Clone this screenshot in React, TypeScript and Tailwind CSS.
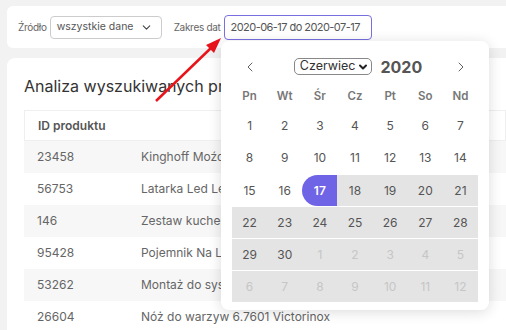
import { ChevronDown, ChevronLeft, ChevronRight } from 'lucide-react';

const rows = [
  { id: '23458', name: 'Kinghoff Moździerz' },
  { id: '56753', name: 'Latarka Led Lenser' },
  { id: '146', name: 'Zestaw kuchenny' },
  { id: '95428', name: 'Pojemnik Na Lunch' },
  { id: '53262', name: 'Montaż do systemu' },
  { id: '26604', name: 'Nóż do warzyw 6.7601 Victorinox' },
];

const weekdays = ['Pn', 'Wt', 'Śr', 'Cz', 'Pt', 'So', 'Nd'];

// six weeks shown, June 2020 starts on Monday
const weeks: { day: number; muted: boolean }[][] = [];
for (let w = 0; w < 6; w++) {
  const week = [];
  for (let d = 0; d < 7; d++) {
    const n = w * 7 + d + 1;
    week.push(n <= 30 ? { day: n, muted: false } : { day: n - 30, muted: true });
  }
  weeks.push(week);
}

function Calendar() {
  return (
    <div className="absolute left-[221px] top-[41px] w-[268px] h-[269px] bg-white rounded-lg shadow-[0_2px_14px_rgba(0,0,0,0.14)] px-[11px]">
      <div className="flex items-center h-[47px] pt-[4px] w-[246px]">
        <div className="w-[35px] flex justify-center text-[#555]">
          <ChevronLeft className="w-4 h-4" strokeWidth={1.4} />
        </div>
        <div className="flex-1 flex items-center justify-center gap-[8px] pl-[6px]">
          <div className="h-[17px] flex items-center gap-[2px] border border-[#888] rounded-[5px] pl-[5px] pr-[2px] text-[12.5px] text-[#333] leading-none">
            Czerwiec
            <ChevronDown className="w-[12px] h-[12px] text-[#222]" strokeWidth={4} />
          </div>
          <span className="text-[16px] font-bold text-[#555]">2020</span>
        </div>
        <div className="w-[35px] flex justify-center text-[#555]">
          <ChevronRight className="w-4 h-4" strokeWidth={1.4} />
        </div>
      </div>
      <div className="grid grid-cols-7 w-[246px] h-[18px] text-[11.5px] font-semibold text-[#777]">
        {weekdays.map((w) => (
          <div key={w} className="flex items-center justify-center">{w}</div>
        ))}
      </div>
      <div className="w-[246px] mt-[4px]">
        {weeks.map((week, wi) => (
          <div key={wi} className={`grid grid-cols-7 h-[32px] ${wi > 1 ? 'border-t border-white' : ''}`}>
            {week.map((c, ci) => {
              const inRange = wi > 2 || (wi === 2 && ci >= 2);
              const start = wi === 2 && ci === 2;
              return (
                <div
                  key={ci}
                  className={`flex items-center justify-center text-[12px] ${
                    start
                      ? 'bg-[#7064e6] text-white font-semibold rounded-l-full'
                      : inRange
                        ? 'bg-[#e4e4e4]'
                        : ''
                  } ${start ? '' : c.muted ? 'text-[#c6c6c6]' : 'text-[#555]'}`}
                >
                  {c.day}
                </div>
              );
            })}
          </div>
        ))}
      </div>
    </div>
  );
}

export default function App() {
  return (
    <div className="relative w-[506px] h-[330px] overflow-hidden bg-[#f2f2f2] font-['Inter',sans-serif]">
      {/* filters */}
      <div className="ml-[7px] mt-[6px] h-[42px] bg-white rounded-l-md flex items-center pl-[11px] text-[10px] tracking-[-0.3px] text-[#666] whitespace-nowrap">
        <span>Źródło</span>
        <div className="ml-[3px] w-[112px] h-[23px] border border-[#ccc] rounded-[4px] flex items-center justify-between pl-[6px] pr-[8px] text-[10.5px] tracking-normal text-[#555]">
          wszystkie dane
          <ChevronDown className="w-[13px] h-[13px] text-[#444]" strokeWidth={2} />
        </div>
        <span className="ml-[12px]">Zakres dat</span>
        <div className="ml-[3px] w-[148px] h-[25px] border border-[#7a6fe0] rounded-[4px] flex items-center pl-[6px] text-[11px] tracking-[-0.55px] text-[#555]">
          2020-06-17 do 2020-07-17
        </div>
      </div>

      {/* report card */}
      <div className="ml-[7px] mt-[10px] h-[280px] bg-white rounded-tl-lg pl-[17px] pt-[14px]">
        <h2 className="text-[16px] text-[#333] h-[38px] leading-[28px] whitespace-nowrap">
          Analiza wyszukiwanych produktów
        </h2>
        <div className="text-[12px] text-[#666]">
          <div className="flex h-[31px] items-center border border-[#efefef] font-semibold text-[#555]">
            <div className="w-[117px] pl-[13px]">ID produktu</div>
          </div>
          {rows.map((r, i) => (
            <div key={r.id} className={`flex h-[32px] items-center whitespace-nowrap ${i % 2 === 0 ? 'bg-[#f7f7f7]' : 'bg-white'}`}>
              <div className="w-[117px] pl-[13px]">{r.id}</div>
              <div>{r.name}</div>
            </div>
          ))}
        </div>
      </div>

      {/* pointer arrow */}
      <svg className="absolute left-0 top-0 pointer-events-none" width="506" height="330">
        <line x1="156" y1="101" x2="212" y2="47" stroke="#e8141c" strokeWidth="2.5" />
        <polygon points="221,38 206,45 214,53" fill="#e8141c" />
      </svg>

      <Calendar />
    </div>
  );
}
